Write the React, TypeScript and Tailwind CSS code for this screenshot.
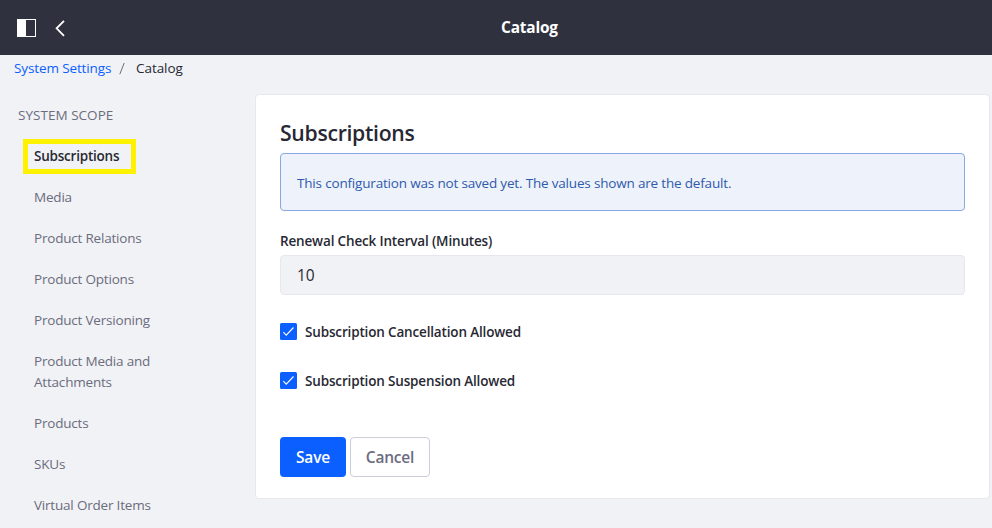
const navItems = [
  "Media",
  "Product Relations",
  "Product Options",
  "Product Versioning",
  "Product Media and Attachments",
  "Products",
  "SKUs",
  "Virtual Order Items",
];

function Header() {
  return (
    <header className="grid h-[55px] grid-cols-[501px_auto_1fr] items-center bg-[#30313f] text-white">
      <div className="flex items-center pl-[17px]">
        <svg width="19" height="18" viewBox="0 0 19 18" shapeRendering="crispEdges">
          <rect x="0.5" y="0.5" width="18" height="17" fill="none" stroke="#fff" />
          <rect x="0" y="0" width="9" height="18" fill="#fff" />
        </svg>
        <svg className="ml-[18px]" width="12" height="18" viewBox="0 0 12 18" fill="none" stroke="#fff" strokeWidth="1.8">
          <path d="M10 1.8L2.6 9.3l7.4 7.5" />
        </svg>
      </div>
      <h1 className="text-[15.4px] leading-6 font-bold">Catalog</h1>
      <div />
    </header>
  );
}

function Breadcrumb() {
  return (
    <nav className="flex h-[27px] items-center pl-[14px] leading-[21px]">
      <a className="w-[97px] tracking-[-0.12px] whitespace-nowrap text-[#0b5fff]">System Settings</a>
      <svg className="ml-2" width="7" height="13" viewBox="0 0 7 13" stroke="#6b6c7e">
        <path d="M0.8 12.2L5.2 1" />
      </svg>
      <span className="ml-[10px] tracking-[-0.05px]">Catalog</span>
    </nav>
  );
}

function Sidebar() {
  return (
    <aside className="w-[255px] pt-[23px] text-[#6b6c7e]">
      <div className="h-[31px] pl-[18px] leading-[21px] tracking-[0.03px]">SYSTEM SCOPE</div>
      <ul>
        <li className="flex h-[41px] items-center pl-[23px]">
          <span className="flex h-[35px] w-[113px] items-center border-[5px] border-[#fff200] pl-[6px] font-semibold tracking-[-0.22px] whitespace-nowrap text-[#272833]">
            Subscriptions
          </span>
        </li>
        {navItems.map((item) => (
          <li key={item} className="w-[180px] py-[10px] pl-[34px] leading-[21px] tracking-[-0.2px]">
            {item}
          </li>
        ))}
      </ul>
    </aside>
  );
}

function CheckRow({ label }: { label: string }) {
  return (
    <label className="flex h-[21px] items-center font-semibold">
      <svg className="mr-2" width="17" height="17" viewBox="0 0 17 17">
        <rect width="17" height="17" rx="1.5" fill="#0b5fff" />
        <path d="M3.4 9.2l2.8 3 7.3-7.7" fill="none" stroke="#fff" strokeWidth="1.1" />
      </svg>
      <span className="pt-[2px]">{label}</span>
    </label>
  );
}

function SettingsCard() {
  return (
    <main className="mt-3 h-[405px] w-[735px] rounded-[4px] border border-[#e7e7ed] bg-white px-6">
      <h2 className="mt-[24px] h-[34px] text-[21.2px] leading-[28px] font-semibold tracking-[-0.3px]">Subscriptions</h2>
      <div className="flex h-[58px] items-center rounded-[4px] border border-[#89a7e0] bg-[#eef2fa] px-4 text-[#2e5aac]">
        <p className="pt-[3px] tracking-[-0.18px]">This configuration was not saved yet. The values shown are the default.</p>
      </div>
      <label className="mt-5 block h-6 leading-[21px] font-semibold">Renewal Check Interval (Minutes)</label>
      <div className="flex h-10 items-center rounded-[4px] border border-[#e7e7ed] bg-[#f1f2f5] px-4 pt-[2px] text-[15.5px]">10</div>
      <div className="mt-[26px] flex flex-col gap-7">
        <CheckRow label="Subscription Cancellation Allowed" />
        <CheckRow label="Subscription Suspension Allowed" />
      </div>
      <div className="mt-[46px] flex gap-1 text-[15.5px] font-semibold">
        <button className="h-10 w-[66px] rounded-[4px] bg-[#0b5fff] pt-[2px] tracking-[-0.2px] text-white">Save</button>
        <button className="h-10 w-[80px] rounded-[4px] border border-[#cdced9] bg-white pt-[2px] tracking-[-0.2px] text-[#6b6c7e]">Cancel</button>
      </div>
    </main>
  );
}

export default function App() {
  return (
    <div className="h-[528px] w-[992px] overflow-hidden bg-[#f1f2f5] font-['Open_Sans','Noto_Sans',sans-serif] text-[13.5px] tracking-[-0.16px] text-[#272833]">
      <Header />
      <Breadcrumb />
      <div className="flex">
        <Sidebar />
        <SettingsCard />
      </div>
    </div>
  );
}
